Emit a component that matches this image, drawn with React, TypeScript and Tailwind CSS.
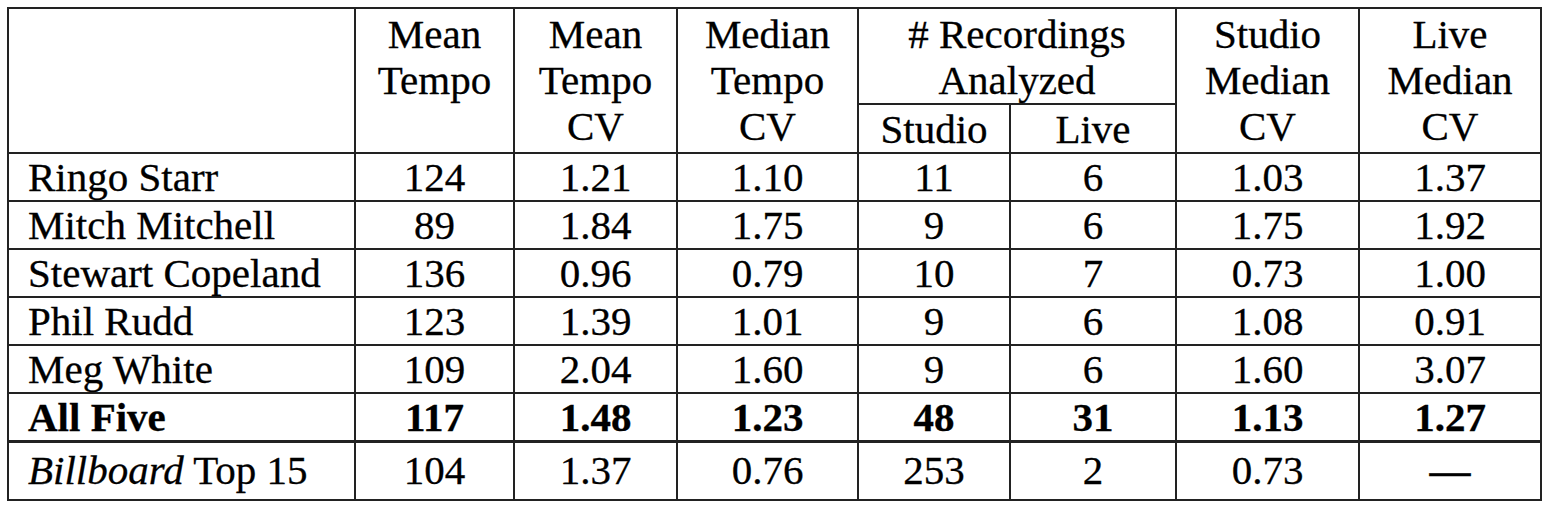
const rows = [
  { name: "Ringo Starr", v: ["124", "1.21", "1.10", "11", "6", "1.03", "1.37"] },
  { name: "Mitch Mitchell", v: ["89", "1.84", "1.75", "9", "6", "1.75", "1.92"] },
  { name: "Stewart Copeland", v: ["136", "0.96", "0.79", "10", "7", "0.73", "1.00"] },
  { name: "Phil Rudd", v: ["123", "1.39", "1.01", "9", "6", "1.08", "0.91"] },
  { name: "Meg White", v: ["109", "2.04", "1.60", "9", "6", "1.60", "3.07"] },
];

const serif = "font-['Liberation_Serif','Times_New_Roman',serif]";
const cell = `${serif} border-2 border-[#222] text-center align-middle p-0`;
const head = `${serif} border-2 border-[#222] text-center align-top pt-[2px] font-normal`;
const name = `${serif} border-2 border-[#222] align-middle pl-[19px]`;

export default function App() {
  return (
    <div className={`w-[1548px] h-[512px] bg-white pl-[7px] pt-[7px] text-black ${serif}`}>
      <table className={`table-fixed border-collapse text-[41px] leading-[46px] w-[1533px] [-webkit-text-stroke:0.3px_#000] ${serif}`}>
        <colgroup>
          <col className="w-[347px]" />
          <col className="w-[159px]" />
          <col className="w-[163px]" />
          <col className="w-[181px]" />
          <col className="w-[152px]" />
          <col className="w-[166px]" />
          <col className="w-[183px]" />
          <col className="w-[182px]" />
        </colgroup>
        <thead>
          <tr className="h-[96px]">
            <th rowSpan={2} className={head}></th>
            <th rowSpan={2} className={head}>Mean<br />Tempo</th>
            <th rowSpan={2} className={head}>Mean<br />Tempo<br />CV</th>
            <th rowSpan={2} className={head}>Median<br />Tempo<br />CV</th>
            <th colSpan={2} className={head}># Recordings<br />Analyzed</th>
            <th rowSpan={2} className={head}>Studio<br />Median<br />CV</th>
            <th rowSpan={2} className={head}>Live<br />Median<br />CV</th>
          </tr>
          <tr className="h-[49px]">
            <th className={`${cell} font-normal`}>Studio</th>
            <th className={`${cell} font-normal`}>Live</th>
          </tr>
        </thead>
        <tbody>
          {rows.map((r) => (
            <tr key={r.name} className="h-[48px]">
              <td className={name}>{r.name}</td>
              {r.v.map((x, i) => (
                <td key={i} className={cell}>{x}</td>
              ))}
            </tr>
          ))}
          <tr className="h-[48px] font-bold">
            <td className={`${name} border-b-[3px]`}>All Five</td>
            {["117", "1.48", "1.23", "48", "31", "1.13", "1.27"].map((x, i) => (
              <td key={i} className={`${cell} border-b-[3px]`}>{x}</td>
            ))}
          </tr>
          <tr className="h-[58px]">
            <td className={`${name} pb-[2px]`}><i>Billboard</i> Top 15</td>
            {["104", "1.37", "0.76", "253", "2", "0.73"].map((x, i) => (
              <td key={i} className={`${cell} pb-[2px]`}>{x}</td>
            ))}
            <td className={`${cell} font-bold pb-[2px]`}>—</td>
          </tr>
        </tbody>
      </table>
    </div>
  );
}
